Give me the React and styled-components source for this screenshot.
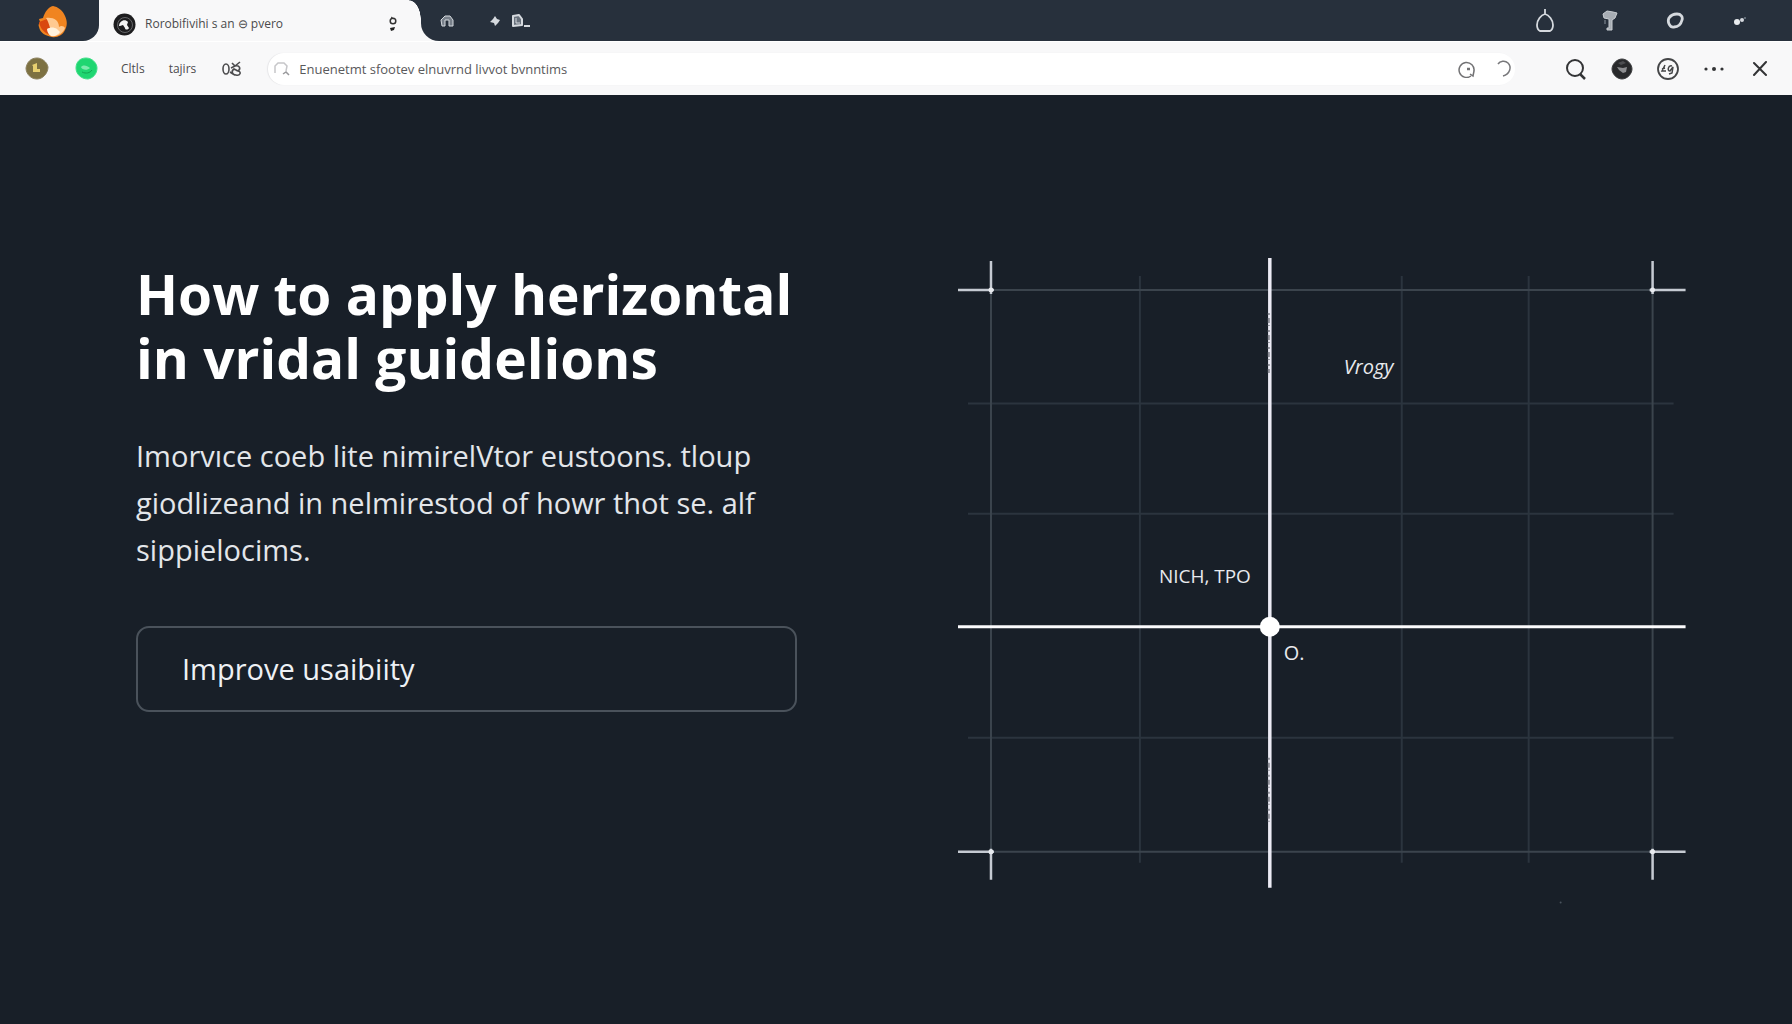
import React, { useState } from 'react';
import styled, { createGlobalStyle } from 'styled-components';

const GlobalStyle = createGlobalStyle`
	* {
		box-sizing: border-box;
	}
	body {
		margin: 0;
		background: #181f28;
		color: #fff;
		font-family: 'Open Sans', 'Noto Sans', sans-serif;
	}
	svg {
		display: block;
	}
`;

const TabStrip = styled.header`
	display: flex;
	height: 41px;
	background: #f8f8f9;
`;
const Brand = styled.div`
	display: flex;
	justify-content: flex-end;
	width: 99px;
	padding: 5px 30px 0 0;
	background: #27303c;
	border-bottom-right-radius: 16px;
`;
const Tab = styled.div`
	position: relative;
	display: flex;
	align-items: center;
	width: 322px;
	padding: 7px 20px 0 14px;
	color: #4a4a4c;
	&::after {
		content: '';
		position: absolute;
		top: 0;
		right: 0;
		width: 12px;
		height: 20px;
		background: radial-gradient(ellipse 12px 20px at 0 100%, transparent 96%, #27303c 100%);
	}
`;
const TabTitle = styled.span`
	flex: 1;
	margin-left: 9px;
	font-size: 12px;
	font-weight: 500;
	line-height: 20px;
	white-space: nowrap;
`;
const StripRest = styled.div`
	flex: 1;
	display: flex;
	justify-content: space-between;
	align-items: center;
	padding: 0 40px 0 14px;
	background: #27303c;
	border-bottom-left-radius: 18px;
`;
const IconGroup = styled.div`
	display: flex;
	align-items: center;
	gap: ${(p) => p.$gap}px;
`;
const IconButton = styled.button`
	display: flex;
	align-items: center;
	justify-content: center;
	width: 24px;
	height: 24px;
	padding: 0;
	border: 0;
	background: none;
	color: ${(p) => (p.$light ? '#d5d9de' : '#333436')};
	cursor: pointer;
`;

const Toolbar = styled.nav`
	display: flex;
	align-items: center;
	height: 54px;
	padding: 1px 20px 0 25px;
	background: #f8f8f9;
	border-top: 1px solid #fff;
`;
const NavLinks = styled.div`
	display: flex;
	align-items: center;
	gap: 24px;
	margin: 0 24px 0 22px;
`;
const NavLink = styled.a`
	color: #4c4c4e;
	font-size: 12px;
	font-weight: 500;
	line-height: 20px;
	text-decoration: none;
`;
const AddressBar = styled.form`
	flex: 1;
	display: flex;
	align-items: center;
	height: 32px;
	margin-right: 49px;
	padding: 0 0 0 2px;
	background: #fff;
	border-radius: 16px;
	box-shadow: -1px 0 1px #e6e6e8;
`;
const AddressInput = styled.input`
	flex: 1;
	min-width: 0;
	padding: 0 0 0 5px;
	border: 0;
	outline: 0;
	background: none;
	color: #59595b;
	font-family: inherit;
	font-size: 13px;
	font-weight: 500;
`;

const Hero = styled.main`
	display: grid;
	grid-template-columns: 10fr 11fr;
	column-gap: 161px;
	align-items: start;
	padding: 163px 106px 80px 136px;
`;
const Copy = styled.section`
	padding-top: 4px;
`;
const Title = styled.h1`
	margin: 0;
	font-size: 55px;
	font-weight: 700;
	line-height: 64px;
	white-space: nowrap;
`;
const Lead = styled.p`
	margin: 42px 0 53px;
	color: #e3e6ea;
	font-size: 29px;
	line-height: 47px;
	white-space: nowrap;
`;
const CallToAction = styled.button`
	width: 100%;
	height: 86px;
	padding: 0 44px 2px;
	border: 2px solid #4a525b;
	border-radius: 13px;
	background: none;
	color: #eef1f5;
	font-family: inherit;
	font-size: 29px;
	text-align: left;
	cursor: pointer;
`;
const Diagram = styled.svg`
	width: 100%;
	height: auto;
	overflow: visible;
`;
const DiagramLabel = styled.text`
	fill: #e8eaee;
	font-family: 'Open Sans', sans-serif;
	font-size: ${(p) => p.$size}px;
	font-style: ${(p) => (p.$italic ? 'italic' : 'normal')};
	font-weight: 500;
`;

const FlameLogo = () => (
	<svg width='32' height='34' viewBox='0 0 32 34' aria-hidden='true'>
		<path d='M16 1C21 2 25 5 27 9c3 5 4 11 1 16-2 5-8 8-13 7C9 31 3 28 2 22 1 20 2 18 3 17l-1-3 4-1c2-6 5-11 10-12z' fill='#f08420' />
		<path d='M2 17l8-3 5 8-2 8C7 28 3 23 2 17z' fill='#d9480f' />
		<path d='M9 13c7-1 13 2 13 9 2-2 5-1 6 1-2 5-7 9-13 8-3-2-4-5-2-8-1-4-2-7-4-10z' fill='#ffc990' />
		<path d='M10 24c3-2 7-2 10 0l3 3c-2 3-6 5-9 4-2-1-4-4-4-7z' fill='#fff1dc' />
	</svg>
);

const Favicon = () => (
	<svg width='23' height='23' viewBox='0 0 23 23' aria-hidden='true'>
		<circle cx='11.5' cy='11.5' r='11' fill='#1d1d1f' />
		<circle cx='12' cy='12' r='7.5' fill='none' stroke='#66676a' strokeWidth='1' />
		<path d='M6 13c0-5 6-8 9-4l-1 3 2 3c-1 2-4 2-4 0l-2-3-3 1z' fill='#f4f4f4' />
	</svg>
);

const GridDiagram = () => (
	<Diagram viewBox='0 0 728 630' role='img' aria-label='Guideline grid'>
		<g stroke='#2b343e' strokeWidth='2'>
			<path d='M182 18V605M444 18V605M571 18V605' />
			<path d='M10 145.500H716M10 256H716M10 480H716' />
		</g>
		<g stroke='#3b444d' strokeWidth='2'>
			<path d='M33 32V594M695 32V594M33 32H695M33 594H695' />
		</g>
		<g stroke='#c5cad2' strokeWidth='2.500'>
			<path d='M0 32H36M33 3V36M692 32H728M695 3V36' />
			<path d='M0 594H36M33 591V622M692 594H728M695 591V622' />
		</g>
		<g fill='#e7eaee'>
			<circle cx='33' cy='32' r='2.500' />
			<circle cx='695' cy='32' r='2.500' />
			<circle cx='33' cy='594' r='2.500' />
			<circle cx='695' cy='594' r='2.500' />
		</g>
		<path d='M0 369H728' stroke='#fbfbfd' strokeWidth='3' />
		<path d='M312 0V630' stroke='#ecebf5' strokeWidth='3.500' />
		<path d='M311 55V115M311 500V568' stroke='#8d8e98' strokeWidth='2' strokeDasharray='2 3 5 2 1 4' />
		<circle cx='312' cy='369' r='10' fill='#fff' />
		<DiagramLabel x='386' y='116' $size={20} $italic>Vrogy</DiagramLabel>
		<DiagramLabel x='201' y='325' $size={19}>NICH, TPO</DiagramLabel>
		<DiagramLabel x='326' y='402' $size={20}>O.</DiagramLabel>
		<circle cx='603' cy='645' r='1' fill='#4a535d' />
	</Diagram>
);

const App = () => {
	const [address, setAddress] = useState('Enuenetmt sfootev elnuvrnd livvot bvnntims');

	return (
		<>
			<GlobalStyle />
			<TabStrip>
				<Brand>
					<FlameLogo />
				</Brand>
				<Tab>
					<Favicon />
					<TabTitle>Rorobifivihi s an ⊖ pvero</TabTitle>
					<svg width='16' height='20' viewBox='0 0 16 20' aria-hidden='true'>
						<circle cx='8' cy='7' r='2.800' fill='none' stroke='#333' strokeWidth='1.500' />
						<path d='M6 3l3 2' stroke='#333' />
						<path d='M5 14l5-1-1 3-3 1z' fill='#222' />
					</svg>
				</Tab>
				<StripRest>
					<IconGroup $gap={24}>
						<IconButton $light aria-label='Home'>
							<svg width='14' height='14' viewBox='0 0 14 14'>
								<path d='M2 12L1 6l4-4 5 0 3 4v6H9V6H5v6z' fill='#78808a' stroke='#d5d9de' strokeLinejoin='round' />
							</svg>
						</IconButton>
						<IconGroup $gap={2}>
							<IconButton $light aria-label='New tab'>
								<svg width='10' height='10' viewBox='0 0 10 10'>
									<path d='M5 0l2 3 3 1-2 3-3 3-1-3-4-1 3-3z' fill='currentColor' />
								</svg>
							</IconButton>
							<IconButton $light aria-label='Document'>
								<svg width='20' height='14' viewBox='0 0 20 14'>
									<path d='M2 2l6-1 3 4v6l-9 1z' fill='#68717c' stroke='currentColor' strokeWidth='2' strokeLinejoin='round' />
									<path d='M5 4v5h4' stroke='currentColor' fill='none' />
									<path d='M13 12h6' stroke='currentColor' strokeWidth='2' />
								</svg>
							</IconButton>
						</IconGroup>
					</IconGroup>
					<IconGroup $gap={41}>
						<IconButton $light aria-label='Notifications'>
							<svg width='20' height='24' viewBox='0 0 20 24'>
								<path d='M10 0v5M10 5c-4 1-8 6-8 11 0 3 1 5 3 6h10c2-1 3-3 3-6 0-5-4-10-8-11z' fill='none' stroke='currentColor' strokeWidth='1.800' />
							</svg>
						</IconButton>
						<IconButton $light aria-label='Passwords'>
							<svg width='16' height='22' viewBox='0 0 16 22'>
								<path d='M1 4l4-3 6 1 4 1-2 5-3 2v10H5v-2h2V9L2 8z' fill='#a7adb4' stroke='#c9cdd2' />
								<path d='M3 10v4' stroke='#59626d' strokeWidth='2' />
							</svg>
						</IconButton>
						<IconButton $light aria-label='Profile'>
							<svg width='18' height='18' viewBox='0 0 18 18'>
								<path d='M3 6c2-3 5-4 8-4 4 0 6 3 5 6-1 4-4 7-8 7-4 1-7-5-5-9z' fill='none' stroke='currentColor' strokeWidth='2.800' />
							</svg>
						</IconButton>
						<IconButton $light aria-label='Window'>
							<svg width='14' height='12' viewBox='0 0 14 12'>
								<circle cx='4' cy='7' r='3' fill='#e9ecef' />
								<circle cx='9' cy='5' r='2' fill='currentColor' />
								<circle cx='12' cy='3' r='1' fill='#76808b' />
							</svg>
						</IconButton>
					</IconGroup>
				</StripRest>
			</TabStrip>

			<Toolbar>
				<IconGroup $gap={26}>
					<IconButton aria-label='Account'>
						<svg width='24' height='24' viewBox='0 0 24 24'>
							<path d='M12 1c5 0 10 4 11 9 0 6-5 12-11 12C6 22 1 17 1 11 2 5 6 1 12 1z' fill='#7d7142' stroke='#8c8260' />
							<path d='M7 8l5-2v6h3v3H8v-6z' fill='#e8d070' />
						</svg>
					</IconButton>
					<IconButton aria-label='Status'>
						<svg width='24' height='24' viewBox='0 0 24 24'>
							<path d='M11 1c6 0 11 5 11 10 0 6-4 10-9 11C6 22 1 17 1 11 1 5 5 1 11 1z' fill='#1fd671' stroke='#42df89' />
							<path d='M6 10c3-3 6-1 9 1-3 3-8 2-9-1z' fill='#7cebad' />
							<path d='M7 15c4 2 8 1 10-2' fill='none' stroke='#11a552' />
						</svg>
					</IconButton>
				</IconGroup>
				<NavLinks>
					<NavLink href='#file'>Cltls</NavLink>
					<NavLink href='#view'>tajirs</NavLink>
					<IconButton aria-label='Extensions'>
						<svg width='22' height='18' viewBox='0 0 22 18' fill='none' stroke='#4c4c4e' strokeWidth='1.600'>
							<ellipse cx='5' cy='9' rx='3' ry='5' />
							<path d='M11 3l3 3M19 2l-5 4c5-1 6 3 3 5 4 1 2 5-2 4-4 0-5-4-2-6l4 2M10 8l4-2M9 12l3 2' />
						</svg>
					</IconButton>
				</NavLinks>
				<AddressBar onSubmit={(e) => e.preventDefault()}>
					<IconButton aria-label='Go'>
						<svg width='18' height='16' viewBox='0 0 18 16' fill='none' stroke='#c6c6c9' strokeWidth='1.500'>
							<path d='M2 12V5l3-3h6l3 3-1 5' />
							<path d='M10 13l3-2 3 3' stroke='#98989b' />
						</svg>
					</IconButton>
					<AddressInput aria-label='Address' value={address} onChange={(e) => setAddress(e.target.value)} />
					<IconGroup $gap={12}>
						<IconButton type='button' aria-label='History'>
							<svg width='18' height='18' viewBox='0 0 18 18' fill='none' stroke='#727274' strokeWidth='1.500'>
								<path d='M13 16A7.500 7.500 0 1 1 16 11l-1 5-3-2' />
								<path d='M9 9h3' strokeWidth='2.500' />
							</svg>
						</IconButton>
						<IconButton type='button' aria-label='Reload'>
							<svg width='18' height='20' viewBox='0 0 18 20' fill='none' stroke='#77777a' strokeWidth='1.500'>
								<path d='M4 5c2-3 7-4 10-1 4 4 2 11-5 13' />
							</svg>
						</IconButton>
					</IconGroup>
				</AddressBar>
				<IconGroup $gap={22}>
					<IconButton aria-label='Search'>
						<svg width='22' height='22' viewBox='0 0 22 22' fill='none' stroke='currentColor' strokeWidth='2'>
							<circle cx='10' cy='10' r='8' />
							<path d='M15 16l5 5' strokeWidth='2.500' />
						</svg>
					</IconButton>
					<IconButton aria-label='Theme'>
						<svg width='22' height='22' viewBox='0 0 22 22'>
							<path d='M11 1c5 0 10 5 10 10s-5 10-10 10S1 16 1 11 6 1 11 1z' fill='#28292b' stroke='#3d3e40' />
							<path d='M6 9l6 1 4-1-1 5-3 1-4-3z' fill='#8c8d90' />
							<path d='M7 5l5-2 3 2-5 2z' fill='#4c4d50' />
						</svg>
					</IconButton>
					<IconButton aria-label='Language'>
						<svg width='24' height='24' viewBox='0 0 24 24' fill='none' stroke='#444547'>
							<circle cx='12' cy='12' r='10' strokeWidth='1.800' />
							<path d='M9 8l-3 6h4M6 12l3-1M16 9c-4-1-5 5-2 5l3-4-1 6-3 1' strokeWidth='1.500' />
						</svg>
					</IconButton>
					<IconButton aria-label='More'>
						<svg width='20' height='6' viewBox='0 0 20 6' fill='currentColor'>
							<circle cx='2' cy='3' r='1.600' />
							<circle cx='10' cy='3' r='2' />
							<circle cx='18' cy='3' r='1.600' />
						</svg>
					</IconButton>
					<IconButton aria-label='Close'>
						<svg width='16' height='16' viewBox='0 0 16 16' stroke='currentColor' strokeWidth='2' strokeLinecap='round'>
							<path d='M2 2l12 12M14 1L2 14' />
						</svg>
					</IconButton>
				</IconGroup>
			</Toolbar>

			<Hero>
				<Copy>
					<Title>
						How to apply herizontal
						<br />
						in vridal guidelions
					</Title>
					<Lead>
						Imorvıce coeb lite nimirelVtor eustoons. tloup
						<br />
						giodlizeand in nelmirestod of howr thot se. alf
						<br />
						sippielocims.
					</Lead>
					<CallToAction>Improve usaibiity</CallToAction>
				</Copy>
				<GridDiagram />
			</Hero>
		</>
	);
};

export default App;
